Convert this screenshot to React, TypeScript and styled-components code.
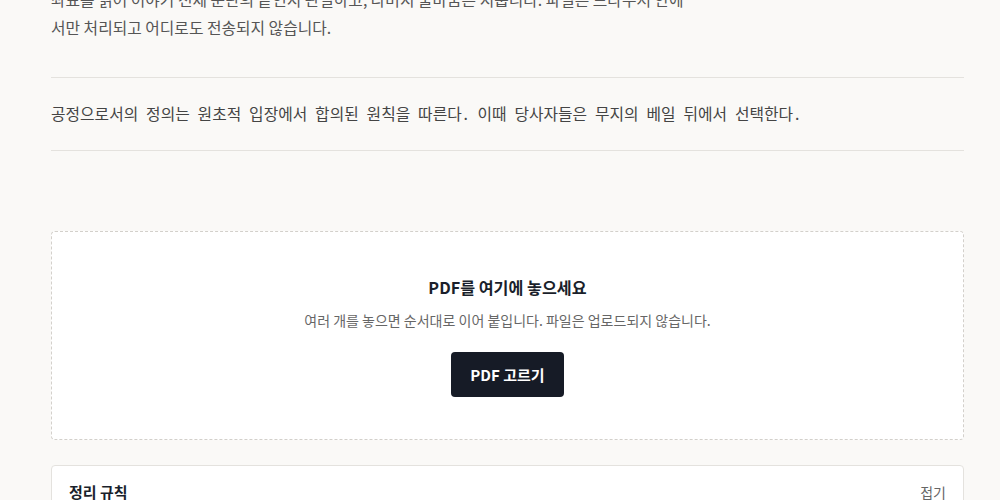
import React from "react";
import styled, { createGlobalStyle } from "styled-components";

const Global = createGlobalStyle`
  html, body { margin: 0; padding: 0; background: #faf9f7; }
  body {
    font-family: "Noto Sans CJK KR", "Noto Sans", sans-serif;
    color: #1a1f2b;
    overflow: hidden;
  }
  * { box-sizing: border-box; }
`;

const Page = styled.main`
  padding: 0 36px 0 51px;
  display: flex;
  flex-direction: column;
`;

const Intro = styled.p`
  margin: -14px 0 0;
  font-size: 15.8px;
  line-height: 28px;
  color: #555;
  max-width: 640px;
`;

const Quote = styled.div`
  margin-top: 35px;
  border-top: 1px solid #e4e2de;
  border-bottom: 1px solid #e4e2de;
  padding: 24px 0 24px;
  font-family: "Noto Sans Mono CJK KR", "Liberation Mono", monospace;
  font-size: 15.8px;
  line-height: 24px;
  color: #444;
`;

const Drop = styled.section`
  margin-top: 80px;
  background: #fff;
  border: 1px dashed #d3d0cb;
  border-radius: 4px;
  padding: 43px 20px 42px;
  display: flex;
  flex-direction: column;
  align-items: center;
`;

const DropTitle = styled.h2`
  margin: 0;
  font-size: 16.2px;
  line-height: 24px;
  font-weight: 700;
  color: #1a1f2b;
`;

const DropHint = styled.p`
  margin: 9px 0 0;
  font-size: 14px;
  line-height: 24px;
  color: #666;
`;

const PickButton = styled.button`
  margin-top: 20px;
  width: 113px;
  height: 45px;
  border: 0;
  border-radius: 4px;
  background: #161b26;
  color: #fff;
  font-family: inherit;
  font-size: 15px;
  font-weight: 700;
  cursor: pointer;
`;

const Card = styled.section`
  margin-top: 25px;
  background: #fff;
  border: 1px solid #e4e2de;
  border-radius: 4px;
  padding: 15px 17px 20px;
`;

const CardHead = styled.div`
  display: flex;
  justify-content: space-between;
  align-items: center;
  line-height: 22px;
`;

const CardTitle = styled.h3`
  margin: 0;
  font-size: 15px;
  font-weight: 700;
  color: #1a1f2b;
`;

const Toggle = styled.button`
  border: 0;
  background: none;
  padding: 0;
  font-family: inherit;
  font-size: 14px;
  color: #666;
  cursor: pointer;
`;

export default function App() {
  return (
    <>
      <Global />
      <Page>
        <Intro>
          좌표를 읽어 이야기 전체 문단의 끝인지 판별하고, 나머지 줄바꿈은 지웁니다. 파일은 브라우저 안에서만 처리되고 어디로도 전송되지 않습니다.
        </Intro>
        <Quote>
          공정으로서의 정의는 원초적 입장에서 합의된 원칙을 따른다. 이때 당사자들은 무지의 베일 뒤에서 선택한다.
        </Quote>
        <Drop>
          <DropTitle>PDF를 여기에 놓으세요</DropTitle>
          <DropHint>여러 개를 놓으면 순서대로 이어 붙입니다. 파일은 업로드되지 않습니다.</DropHint>
          <PickButton type="button">PDF 고르기</PickButton>
        </Drop>
        <Card>
          <CardHead>
            <CardTitle>정리 규칙</CardTitle>
            <Toggle type="button">접기</Toggle>
          </CardHead>
        </Card>
      </Page>
    </>
  );
}
